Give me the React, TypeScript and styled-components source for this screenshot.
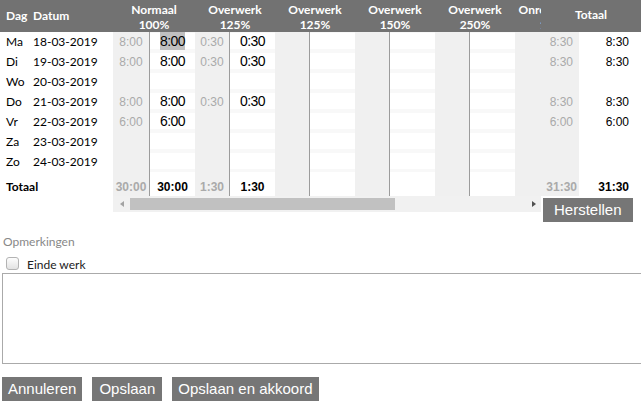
import styled, { createGlobalStyle } from "styled-components";

const GlobalStyle = createGlobalStyle`
  body {
    margin: 0;
    background: #fff;
    font-family: Lato, "Open Sans", sans-serif;
    color: #000;
  }
`;

const Page = styled.div`
  width: 641px;
  height: 415px;
  overflow: hidden;
`;

const TableArea = styled.div`
  display: flex;
  align-items: flex-start;
`;

const FixedLeft = styled.div`
  flex: none;
  width: 113px;
`;

const HeaderBar = styled.div`
  display: flex;
  height: 32px;
  line-height: 32px;
  background: #727272;
  color: #fff;
  font-weight: 700;
  font-size: 12px;
`;

const DayCell = styled.div`
  width: 33px;
  padding-left: 6px;
  box-sizing: border-box;
`;

const LeftRow = styled.div`
  display: flex;
  height: 20px;
  line-height: 20px;
  font-size: 12px;
`;

const TotalLabel = styled.div`
  height: 24px;
  padding: 6px 0 0 6px;
  box-sizing: border-box;
  line-height: 18px;
  font-size: 12px;
  font-weight: 700;
`;

const ScrollPane = styled.div`
  flex: none;
  width: 428px;
`;

const Viewport = styled.div`
  overflow: hidden;
`;

const Strip = styled.div`
  display: flex;
  width: max-content;
`;

const Group = styled.div`
  display: flex;
  flex-direction: column;
  flex: none;
`;

const GroupHeader = styled.div`
  height: 32px;
  box-sizing: border-box;
  padding-top: 2px;
  background: #727272;
  color: #fff;
  font-size: 12px;
  font-weight: 700;
  line-height: 15px;
  text-align: center;
  white-space: nowrap;
  overflow: hidden;
`;

const GroupBody = styled.div`
  display: flex;
`;

const PlanCol = styled.div<{ $w: number }>`
  width: ${(p) => p.$w}px;
  background: #f0f0f0;
`;

const InputCol = styled.div`
  width: 45px;
  border-left: 1px solid #9c9c9c;
  background: #f8f8f8;
`;

const PlanCell = styled.div`
  height: 20px;
  line-height: 20px;
  text-align: center;
  font-family: "Liberation Sans", Arial, sans-serif;
  font-size: 12px;
  color: #aaa;
`;

const InputCell = styled.div`
  height: 20px;
  padding: 1px 0 3px;
  box-sizing: border-box;
`;

const InputBox = styled.div`
  height: 16px;
  background: #fff;
  line-height: 16px;
  text-align: center;
  font-family: "Liberation Sans", Arial, sans-serif;
  font-size: 14px;
  letter-spacing: -0.6px;
  color: #000;
`;

const Selected = styled.span`
  background: #c0c0c0;
  padding: 1px 0;
`;

const TotalCell = styled.div<{ $muted?: boolean; $align?: string; $pr?: number }>`
  height: 24px;
  padding: 6px ${(p) => p.$pr ?? 0}px 0 0;
  box-sizing: border-box;
  line-height: 18px;
  text-align: ${(p) => p.$align ?? "center"};
  font-family: "Liberation Sans", Arial, sans-serif;
  font-size: 12px;
  font-weight: 700;
  color: ${(p) => (p.$muted ? "#aaa" : "#000")};
  background: ${(p) => (p.$muted ? "transparent" : "#fff")};
`;

const ScrollBar = styled.div`
  display: flex;
  align-items: center;
  height: 16px;
  background: #f1f1f1;
`;

const ArrowBox = styled.div<{ $w: number }>`
  flex: none;
  width: ${(p) => p.$w}px;
  display: flex;
  justify-content: center;
`;

const Arrow = styled.div<{ $dir: "left" | "right" }>`
  width: 0;
  height: 0;
  border-top: 3.5px solid transparent;
  border-bottom: 3.5px solid transparent;
  ${(p) =>
    p.$dir === "left"
      ? "border-right: 4px solid #a3a3a3;"
      : "border-left: 4px solid #505050;"}
`;

const Thumb = styled.div`
  flex: none;
  width: 265px;
  height: 12px;
  background: #c1c1c1;
`;

const Spacer = styled.div`
  flex: 1;
`;

const FixedRight = styled.div`
  flex: none;
  width: 100px;
`;

const CenterHeader = styled(HeaderBar)`
  justify-content: center;
  line-height: 30px;
`;

const RightBody = styled.div`
  display: flex;
`;

const RightCol = styled.div<{ $w: number; $bg: string }>`
  width: ${(p) => p.$w}px;
  background: ${(p) => p.$bg};
`;

const RightCell = styled.div<{ $muted?: boolean; $pr: number }>`
  height: 20px;
  line-height: 20px;
  padding-right: ${(p) => p.$pr}px;
  text-align: right;
  font-family: "Liberation Sans", Arial, sans-serif;
  font-size: 12px;
  color: ${(p) => (p.$muted ? "#aaa" : "#000")};
`;

const Button = styled.button<{ $pad?: number }>`
  height: 24px;
  padding: 0 ${(p) => p.$pad ?? 6}px;
  border: none;
  border-radius: 0;
  background: #767676;
  color: #fff;
  font-family: "Liberation Sans", Arial, sans-serif;
  font-size: 15px;
  line-height: 24px;
  cursor: pointer;
`;

const ResetRow = styled.div`
  padding: 2px 0 0 2px;
`;

const Remarks = styled.div`
  margin-top: 12px;
  padding-left: 3px;
  font-size: 12px;
  line-height: 16px;
  color: #888;
`;

const CheckRow = styled.label`
  display: flex;
  align-items: center;
  gap: 8px;
  height: 20px;
  margin-top: 3px;
  padding-left: 6px;
  font-size: 12px;
  color: #222;
  span {
    padding-top: 2px;
  }
`;

const Check = styled.input`
  appearance: none;
  margin: 0;
  width: 13px;
  height: 13px;
  border: 1px solid #b3b3b3;
  border-radius: 3px;
  background: linear-gradient(#fdfdfd, #e2e2e2);
`;

const Notes = styled.textarea`
  display: block;
  width: 660px;
  height: 91px;
  margin-left: 2px;
  box-sizing: border-box;
  border: 1px solid #aaa;
  resize: none;
`;

const Actions = styled.div`
  display: flex;
  gap: 10px;
  margin: 13px 0 0 2px;
`;

type Row = {
  dag: string;
  datum: string;
  plan: string[];
  input: string[];
  totPlan: string;
  tot: string;
};

const empty = { plan: [], input: [], totPlan: "", tot: "" };

const rows: Row[] = [
  { dag: "Ma", datum: "18-03-2019", plan: ["8:00", "0:30"], input: ["8:00", "0:30"], totPlan: "8:30", tot: "8:30" },
  { dag: "Di", datum: "19-03-2019", plan: ["8:00", "0:30"], input: ["8:00", "0:30"], totPlan: "8:30", tot: "8:30" },
  { dag: "Wo", datum: "20-03-2019", ...empty },
  { dag: "Do", datum: "21-03-2019", plan: ["8:00", "0:30"], input: ["8:00", "0:30"], totPlan: "8:30", tot: "8:30" },
  { dag: "Vr", datum: "22-03-2019", plan: ["6:00"], input: ["6:00"], totPlan: "6:00", tot: "6:00" },
  { dag: "Za", datum: "23-03-2019", ...empty },
  { dag: "Zo", datum: "24-03-2019", ...empty },
];

const groups = [
  { title: "Normaal", pct: "100%", w: 36, totPlan: "30:00", tot: "30:00" },
  { title: "Overwerk", pct: "125%", w: 34, totPlan: "1:30", tot: "1:30" },
  { title: "Overwerk", pct: "125%", w: 34, totPlan: "", tot: "" },
  { title: "Overwerk", pct: "150%", w: 34, totPlan: "", tot: "" },
  { title: "Overwerk", pct: "250%", w: 34, totPlan: "", tot: "" },
  { title: "Onregelmatig", pct: "150%", w: 34, totPlan: "", tot: "" },
  { title: "Onregelmatig", pct: "200%", w: 34, totPlan: "", tot: "" },
  { title: "Toeslag", pct: "50%", w: 34, totPlan: "", tot: "" },
];

function App() {
  return (
    <Page>
      <GlobalStyle />
      <TableArea>
        <FixedLeft>
          <HeaderBar>
            <DayCell>Dag</DayCell>
            <div>Datum</div>
          </HeaderBar>
          {rows.map((r) => (
            <LeftRow key={r.datum}>
              <DayCell>{r.dag}</DayCell>
              <div>{r.datum}</div>
            </LeftRow>
          ))}
          <TotalLabel>Totaal</TotalLabel>
        </FixedLeft>

        <ScrollPane>
          <Viewport>
            <Strip>
              {groups.map((g, gi) => (
                <Group key={gi}>
                  <GroupHeader>
                    {g.title}
                    <br />
                    {g.pct}
                  </GroupHeader>
                  <GroupBody>
                    <PlanCol $w={g.w}>
                      {rows.map((r) => (
                        <PlanCell key={r.datum}>{r.plan[gi] ?? ""}</PlanCell>
                      ))}
                      <TotalCell $muted>{g.totPlan}</TotalCell>
                    </PlanCol>
                    <InputCol>
                      {rows.map((r, ri) => (
                        <InputCell key={r.datum}>
                          <InputBox>
                            {gi === 0 && ri === 0 ? (
                              <Selected>{r.input[gi]}</Selected>
                            ) : (
                              r.input[gi] ?? ""
                            )}
                          </InputBox>
                        </InputCell>
                      ))}
                      <TotalCell>{g.tot}</TotalCell>
                    </InputCol>
                  </GroupBody>
                </Group>
              ))}
            </Strip>
          </Viewport>
          <ScrollBar>
            <ArrowBox $w={17}>
              <Arrow $dir="left" />
            </ArrowBox>
            <Thumb />
            <Spacer />
            <ArrowBox $w={15}>
              <Arrow $dir="right" />
            </ArrowBox>
          </ScrollBar>
        </ScrollPane>

        <FixedRight>
          <CenterHeader>Totaal</CenterHeader>
          <RightBody>
            <RightCol $w={38} $bg="#f0f0f0">
              {rows.map((r) => (
                <RightCell key={r.datum} $muted $pr={6}>
                  {r.totPlan}
                </RightCell>
              ))}
              <TotalCell $muted $align="right" $pr={2}>
                31:30
              </TotalCell>
            </RightCol>
            <RightCol $w={62} $bg="#fff">
              {rows.map((r) => (
                <RightCell key={r.datum} $pr={12}>
                  {r.tot}
                </RightCell>
              ))}
              <TotalCell $align="right" $pr={12}>
                31:30
              </TotalCell>
            </RightCol>
          </RightBody>
          <ResetRow>
            <Button $pad={11}>Herstellen</Button>
          </ResetRow>
        </FixedRight>
      </TableArea>

      <Remarks>Opmerkingen</Remarks>
      <CheckRow>
        <Check type="checkbox" />
        <span>Einde werk</span>
      </CheckRow>
      <Notes />

      <Actions>
        <Button>Annuleren</Button>
        <Button $pad={7}>Opslaan</Button>
        <Button>Opslaan en akkoord</Button>
      </Actions>
    </Page>
  );
}

export default App;
